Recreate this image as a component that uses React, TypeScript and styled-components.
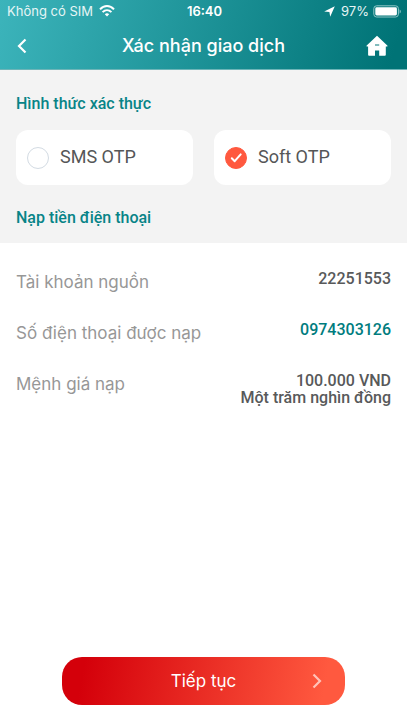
import React, { useState } from 'react';
import styled, { createGlobalStyle } from 'styled-components';

const ui = '"Inter", "Liberation Sans", sans-serif';
const din = '"Roboto", "Liberation Sans", sans-serif';

const GlobalStyle = createGlobalStyle`
  *, *::before, *::after { box-sizing: border-box; }
  body { margin: 0; background: #fff; }
  button, input { font: inherit; margin: 0; }
`;

const Screen = styled.div`
  display: flex;
  flex-direction: column;
  min-height: 100vh;
  font-family: ${ui};
  background: #fff;
`;

const Header = styled.header`
  color: #fff;
  background: linear-gradient(105deg, #3cb4bb 0%, #007376 96%);
  border-bottom: 1px solid #6db5b8;
`;

const StatusBar = styled.div`
  display: grid;
  grid-template-columns: 1fr auto 1fr;
  align-items: center;
  height: 22px;
  padding: 0 5px 0 7px;
  font-size: 13px;
  line-height: 22px;
`;

const StatusGroup = styled.div<{ $end?: boolean }>`
  display: flex;
  align-items: center;
  justify-content: ${(p) => (p.$end ? 'flex-end' : 'flex-start')};
  gap: ${(p) => (p.$end ? 4 : 6)}px;
  white-space: nowrap;
  color: #e6f5f5;
`;

const Clock = styled.time`
  font-weight: 600;
`;

const NavBar = styled.nav`
  display: grid;
  grid-template-columns: 44px 1fr 44px;
  align-items: center;
  height: 47px;
  padding: 0 8px 0 0;
`;

const Title = styled.h1`
  margin: 0;
  padding-left: 8px;
  text-align: center;
  font-size: 18px;
  line-height: 24px;
  font-weight: 500;
`;

const IconButton = styled.button`
  display: grid;
  place-items: center;
  height: 44px;
  padding: 0;
  border: 0;
  background: none;
  color: #fff;
`;

const Methods = styled.section`
  padding: 24px 16px 15px;
  background: #f3f3f3;
`;

const Heading = styled.h2`
  margin: 0;
  font-family: ${din};
  font-size: 16px;
  line-height: 20px;
  font-weight: 500;
  color: #078487;
`;

const Options = styled.div`
  display: grid;
  grid-template-columns: 1fr 1fr;
  gap: 21px;
  margin: 16px 0 23px;
`;

const Option = styled.label`
  display: flex;
  align-items: center;
  gap: 11px;
  height: 55px;
  padding: 0 11px;
  border-radius: 12px;
  background: #fff;
`;

const OptionText = styled.span`
  padding-bottom: 2px;
  font-family: ${din};
  font-size: 18px;
  line-height: 24px;
  color: #555657;
`;

const RadioBox = styled.span`
  display: grid;
  place-items: center;
  > * { grid-area: 1 / 1; }
  svg { pointer-events: none; }
`;

const Radio = styled.input`
  appearance: none;
  width: 22px;
  height: 22px;
  border: 1px solid #d3dbe3;
  border-radius: 50%;
  background: #fff;
  &:checked { border-color: #ff593f; background: #ff593f; }
`;

const Details = styled.dl`
  display: flex;
  flex-direction: column;
  gap: 27px;
  margin: 0;
  padding: 27px 16px;
`;

const Detail = styled.div`
  display: flex;
  justify-content: space-between;
  align-items: flex-start;
`;

const Term = styled.dt`
  padding-top: 1px;
  font-size: 17px;
  line-height: 23px;
  color: #979797;
`;

const Value = styled.dd<{ $accent?: boolean }>`
  margin: 0;
  text-align: right;
  font-family: ${din};
  font-size: 16px;
  line-height: 17px;
  font-weight: 500;
  color: ${(p) => (p.$accent ? '#007c7e' : '#58595a')};
`;

const Footer = styled.footer`
  margin-top: auto;
  padding: 0 62px 20px;
`;

const Submit = styled.button`
  display: grid;
  grid-template-columns: 24px 1fr 24px;
  align-items: center;
  justify-items: center;
  width: 100%;
  height: 48px;
  padding: 0 16px;
  border: 0;
  border-radius: 20px;
  color: #fff;
  background: linear-gradient(100deg, #d4000a 8%, #ff593f 92%);
  font-size: 17px;
  line-height: 24px;
`;

const SubmitText = styled.span`
  grid-column: 2;
`;

const Wifi = () => (
  <svg width="16" height="12" viewBox="0 0 16 12" fill="none" stroke="#fff" strokeWidth="2" aria-hidden="true">
    <path d="M1 4.4C5-.1 11-.1 15 4.4" />
    <path d="M3.6 7.1c2.6-2.6 6.2-2.6 8.8 0" />
    <path d="M8 11.4 5.8 9.2c1.3-1.2 3.1-1.2 4.4 0Z" fill="#fff" stroke="none" />
  </svg>
);

const LocationArrow = () => (
  <svg width="13" height="11" viewBox="0 0 13 11" fill="#fff" aria-hidden="true">
    <path d="M10.8.2 6.2 10.8 5.4 6 .2 5.4Z" />
  </svg>
);

const Battery = () => (
  <svg width="29" height="13" viewBox="0 0 29 13" aria-hidden="true">
    <rect x=".8" y=".8" width="24.6" height="11.2" rx="2.8" fill="none" stroke="#8fc6c7" strokeWidth="1" />
    <rect x="2.3" y="2.3" width="21.6" height="8.2" rx="1.4" fill="#fff" />
    <path d="M26.6 4.4c1.6.6 1.6 3.4 0 4Z" fill="#8fc6c7" />
  </svg>
);

const BackIcon = () => (
  <svg width="10" height="16" viewBox="0 0 10 16" fill="none" stroke="currentColor" strokeWidth="2.2" aria-hidden="true">
    <path d="M8.5 1.5 2 8l6.5 6.5" />
  </svg>
);

const HomeIcon = () => (
  <svg width="22" height="22" viewBox="0 0 22 22" fill="currentColor" aria-hidden="true">
    <path
      fillRule="evenodd"
      d="M11 .8 21.3 10.4c.4.5.2 1-.4 1h-1.1v8.4c0 .6-.3.9-.9.9h-5.7v-5.3H9v5.3H3c-.6 0-.9-.3-.9-.9v-8.4H1.1c-.6 0-.8-.5-.4-1ZM9 9.4v1h4.2v-1Z"
    />
  </svg>
);

const CheckIcon = () => (
  <svg width="22" height="22" viewBox="0 0 22 22" fill="none" stroke="#fff" strokeWidth="2" strokeLinecap="round" strokeLinejoin="round" aria-hidden="true">
    <path d="m6.8 11.3 2.9 2.9 6-6.8" />
  </svg>
);

const NextIcon = () => (
  <svg width="10" height="16" viewBox="0 0 10 16" fill="none" stroke="#ffc2b8" strokeWidth="2.2" aria-hidden="true">
    <path d="M1.5 1.5 8 8l-6.5 6.5" />
  </svg>
);

const methods = ['SMS OTP', 'Soft OTP'];

export default function App() {
  const [method, setMethod] = useState('Soft OTP');
  return (
    <Screen>
      <GlobalStyle />
      <Header>
        <StatusBar>
          <StatusGroup>
            <span>Không có SIM</span>
            <Wifi />
          </StatusGroup>
          <Clock>16:40</Clock>
          <StatusGroup $end>
            <LocationArrow />
            <span>97%</span>
            <Battery />
          </StatusGroup>
        </StatusBar>
        <NavBar>
          <IconButton type="button" aria-label="Quay lại">
            <BackIcon />
          </IconButton>
          <Title>Xác nhận giao dịch</Title>
          <IconButton type="button" aria-label="Trang chủ">
            <HomeIcon />
          </IconButton>
        </NavBar>
      </Header>
      <main>
        <Methods>
          <Heading>Hình thức xác thực</Heading>
          <Options role="radiogroup" aria-label="Hình thức xác thực">
            {methods.map((name) => (
              <Option key={name}>
                <RadioBox>
                  <Radio type="radio" name="method" value={name} checked={method === name} onChange={() => setMethod(name)} />
                  {method === name && <CheckIcon />}
                </RadioBox>
                <OptionText>{name}</OptionText>
              </Option>
            ))}
          </Options>
          <Heading>Nạp tiền điện thoại</Heading>
        </Methods>
        <Details>
          <Detail>
            <Term>Tài khoản nguồn</Term>
            <Value>22251553</Value>
          </Detail>
          <Detail>
            <Term>Số điện thoại được nạp</Term>
            <Value $accent>0974303126</Value>
          </Detail>
          <Detail>
            <Term>Mệnh giá nạp</Term>
            <Value>
              100.000 VND
              <br />
              Một trăm nghìn đồng
            </Value>
          </Detail>
        </Details>
      </main>
      <Footer>
        <Submit type="button">
          <SubmitText>Tiếp tục</SubmitText>
          <NextIcon />
        </Submit>
      </Footer>
    </Screen>
  );
}
